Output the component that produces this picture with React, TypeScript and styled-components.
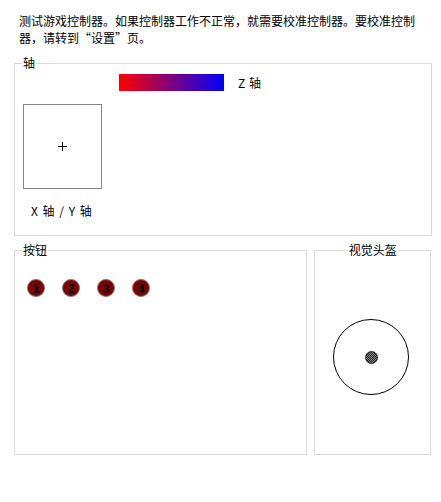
import React from 'react'
import styled, { createGlobalStyle } from 'styled-components'

const GlobalStyle = createGlobalStyle`
  html, body {
    margin: 0;
    padding: 0;
    background: #fff;
  }
  body {
    font-family: "Noto Sans CJK SC", "Microsoft YaHei", "Liberation Sans", sans-serif;
    font-size: 12px;
    color: #000;
  }
`

const Page = styled.div`
  width: 441px;
  height: 502px;
  box-sizing: border-box;
  padding: 12px 10px 0 14px;
`

const Intro = styled.p`
  margin: 0 0 9px 5px;
  width: 410px;
  line-height: 17px;
`

const Group = styled.fieldset<{ $width: number; $height: number }>`
  margin: 0;
  padding: 0;
  box-sizing: border-box;
  width: ${(p) => p.$width}px;
  height: ${(p) => p.$height}px;
  border: 1px solid #dadada;
  min-width: 0;
`

const Legend = styled.legend<{ $center?: boolean }>`
  padding: 0 1px;
  margin: ${(p) => (p.$center ? '0 auto' : '0 0 0 7px')};
  line-height: 16px;
  font-size: 12px;
`

const ZRow = styled.div`
  display: flex;
  align-items: center;
  gap: 14px;
  margin: 3px 0 0 104px;
`

const ZBar = styled.div`
  width: 105px;
  height: 17px;
  background: linear-gradient(to right, #ff0000, #0000ff);
`

const AxisLabel = styled.span`
  line-height: 16px;
  word-spacing: 1px;
`

const XYBox = styled.div`
  margin: 13px 0 0 8px;
  width: 79px;
  height: 85px;
  box-sizing: border-box;
  border: 1px solid #858585;
  display: flex;
  align-items: center;
  justify-content: center;
`

const Cross = styled.svg`
  display: block;
`

const XYLabel = styled.div`
  margin: 14px 0 0 16px;
  line-height: 16px;
  word-spacing: 2px;
`

const BottomRow = styled.div`
  display: flex;
  gap: 7px;
  margin-top: 6px;
`

const ButtonRow = styled.div`
  display: flex;
  gap: 17px;
  margin: 21px 0 0 12px;
`

const JoyButton = styled.div`
  width: 18px;
  height: 18px;
  box-sizing: border-box;
  border-radius: 50%;
  background: #800000;
  border: 1px solid #7a7a7a;
  display: flex;
  align-items: center;
  justify-content: center;
  font-family: "Liberation Sans", Arial, sans-serif;
  font-weight: bold;
  font-size: 13px;
  line-height: 1;
  color: #000;
`

const PovArea = styled.div`
  display: flex;
  justify-content: center;
  padding: 61px 3px 0 0;
`

const PovRing = styled.div`
  width: 76px;
  height: 76px;
  box-sizing: border-box;
  border-radius: 50%;
  border: 1px solid #000;
  display: flex;
  align-items: center;
  justify-content: center;
`

const PovDot = styled.div`
  width: 13px;
  height: 13px;
  box-sizing: border-box;
  border-radius: 50%;
  border: 1px solid #222;
  background: repeating-conic-gradient(#222 0 25%, #8a8a8a 0 50%) 0 0 / 2px 2px;
`

export default function App() {
  return (
    <>
      <GlobalStyle />
      <Page>
        <Intro>
          测试游戏控制器。如果控制器工作不正常，就需要校准控制器。要校准控制器，请转到“设置”页。
        </Intro>
        <Group $width={418} $height={181}>
          <Legend>轴</Legend>
          <ZRow>
            <ZBar />
            <AxisLabel>Z 轴</AxisLabel>
          </ZRow>
          <XYBox>
            <Cross width="9" height="9" viewBox="0 0 9 9">
              <path d="M4.5 0V9M0 4.5H9" stroke="#000" strokeWidth="1" />
            </Cross>
          </XYBox>
          <XYLabel>X 轴 / Y 轴</XYLabel>
        </Group>
        <BottomRow>
          <Group $width={294} $height={213}>
            <Legend>按钮</Legend>
            <ButtonRow>
              {[1, 2, 3, 4].map((n) => (
                <JoyButton key={n}>{n}</JoyButton>
              ))}
            </ButtonRow>
          </Group>
          <Group $width={117} $height={213}>
            <Legend $center>视觉头盔</Legend>
            <PovArea>
              <PovRing>
                <PovDot />
              </PovRing>
            </PovArea>
          </Group>
        </BottomRow>
      </Page>
    </>
  )
}
